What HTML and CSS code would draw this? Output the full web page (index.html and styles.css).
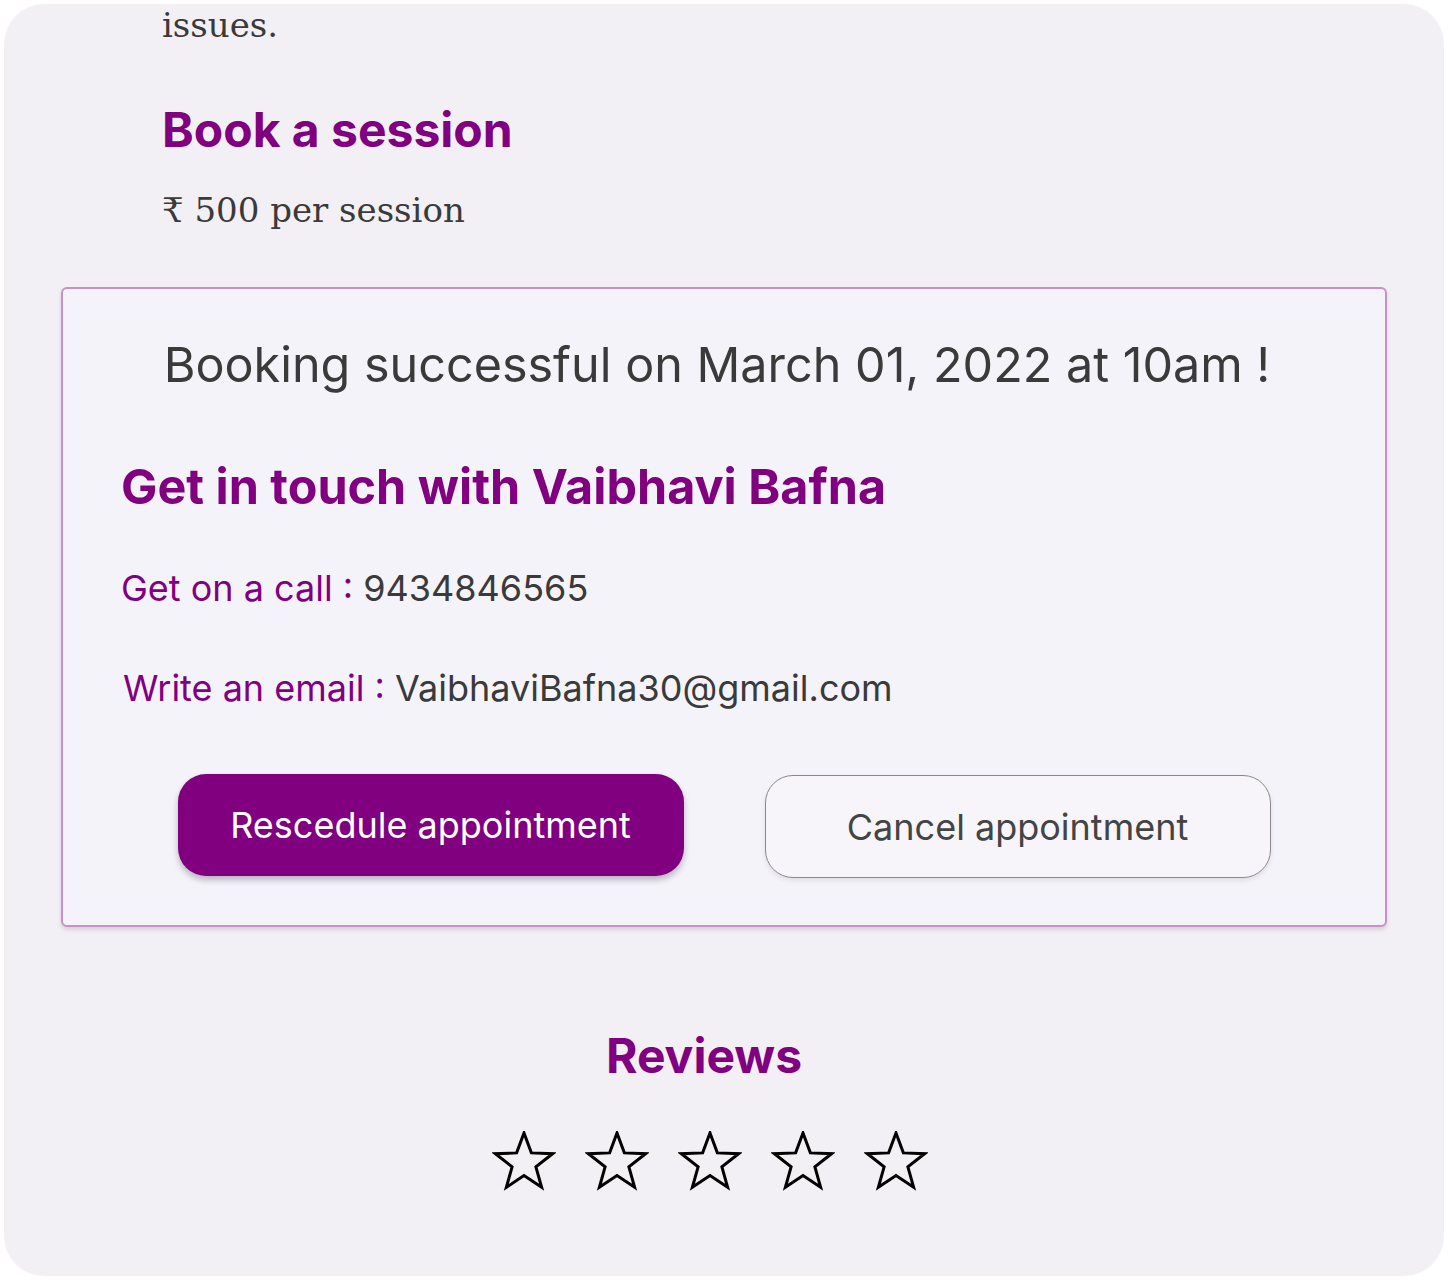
FILE: index.html
```html
<!DOCTYPE html>
<html>
<head>
<meta charset="utf-8">
<link rel="stylesheet" href="styles.css">
</head>
<body>
<div class="card">
  <p class="intro">issues.</p>
  <h2 class="book">Book a session</h2>
  <p class="price">₹ 500 per session</p>
  <section class="box">
    <h3 class="success">Booking successful on March 01, 2022 at 10am !</h3>
    <h2 class="touch">Get in touch with Vaibhavi Bafna</h2>
    <p class="line call"><span class="label">Get on a call :</span> 9434846565</p>
    <p class="line email"><span class="label">Write an email :</span> VaibhaviBafna30@gmail.com</p>
    <div class="actions">
      <button class="btn primary">Rescedule appointment</button>
      <button class="btn outline">Cancel appointment</button>
    </div>
  </section>
  <h2 class="reviews">Reviews</h2>
  <div class="stars">
    <svg class="star" viewBox="0 0 64 60"><polygon points="32,2 39.35,21.89 60.53,22.73 43.89,35.86 49.63,56.27 32,44.5 14.37,56.27 20.11,35.86 3.47,22.73 24.65,21.89"/></svg>
    <svg class="star" viewBox="0 0 64 60"><polygon points="32,2 39.35,21.89 60.53,22.73 43.89,35.86 49.63,56.27 32,44.5 14.37,56.27 20.11,35.86 3.47,22.73 24.65,21.89"/></svg>
    <svg class="star" viewBox="0 0 64 60"><polygon points="32,2 39.35,21.89 60.53,22.73 43.89,35.86 49.63,56.27 32,44.5 14.37,56.27 20.11,35.86 3.47,22.73 24.65,21.89"/></svg>
    <svg class="star" viewBox="0 0 64 60"><polygon points="32,2 39.35,21.89 60.53,22.73 43.89,35.86 49.63,56.27 32,44.5 14.37,56.27 20.11,35.86 3.47,22.73 24.65,21.89"/></svg>
    <svg class="star" viewBox="0 0 64 60"><polygon points="32,2 39.35,21.89 60.53,22.73 43.89,35.86 49.63,56.27 32,44.5 14.37,56.27 20.11,35.86 3.47,22.73 24.65,21.89"/></svg>
  </div>
</div>
</body>
</html>
```
FILE: styles.css
```css
html, body { margin: 0; padding: 0; background: #ffffff; }
.card {
  margin: 4px;
  width: 1440px;
  height: 1272px;
  box-sizing: border-box;
  border-radius: 40px;
  background: #f2f0f5;
  overflow: hidden;
  padding: 0 57px;
}
.intro, .price {
  font-family: "DejaVu Serif", "Liberation Serif", serif;
  color: #3a3a3a;
  margin: 0;
  padding-left: 101px;
  font-size: 34px;
}
.intro { margin-top: 0; line-height: 42px; }
.book {
  font-family: Inter, "Noto Sans", sans-serif;
  font-weight: 700;
  color: #800080;
  font-size: 48px;
  margin: 55px 0 0 0;
  padding-left: 101px;
  line-height: 58px;
}
.price { margin-top: 29px; line-height: 44px; }
.box {
  margin-top: 55px;
  border: 2px solid #c890c8;
  border-radius: 6px;
  background: #f5f3fa;
  box-shadow: 0 3px 4px rgba(0,0,0,0.12);
  height: 640px;
  box-sizing: border-box;
  padding: 0 58px;
}
.success {
  font-family: Inter, "Noto Sans", sans-serif;
  font-weight: 400;
  font-size: 48.5px;
  color: #3a3a3a;
  text-align: center;
  margin: 46px 0 0 0;
  padding-right: 14px;
  line-height: 60px;
}
.touch {
  font-family: Inter, "Noto Sans", sans-serif;
  font-weight: 700;
  color: #800080;
  font-size: 48.5px;
  margin: 63px 0 0 0;
  line-height: 58px;
}
.line {
  font-family: Inter, "Noto Sans", sans-serif;
  font-size: 36px;
  color: #3a3a3a;
  margin: 0;
  line-height: 44px;
}
.line .label { color: #800080; }
.call { margin-top: 50px; }
.email { margin-top: 56px; padding-left: 2px; }
.actions {
  display: flex;
  justify-content: center;
  gap: 81px;
  margin-top: 64px;
}
.btn {
  width: 506px;
  height: 102px;
  font-family: Inter, "Noto Sans", sans-serif;
  font-size: 36px;
  border-radius: 28px;
}
.primary {
  background: #800080;
  color: #ffffff;
  border: none;
  box-shadow: 0 4px 6px rgba(0,0,0,0.25);
}
.outline {
  background: #f7f5fa;
  color: #444444;
  border: 1px solid #888888;
  box-shadow: 0 3px 5px rgba(0,0,0,0.08);
  margin-top: 1px;
  height: 103px;
}
.reviews {
  font-family: Inter, "Noto Sans", sans-serif;
  font-weight: 700;
  color: #800080;
  font-size: 48px;
  text-align: center;
  margin: 100px 0 0 0;
  padding-right: 40px;
  line-height: 58px;
}
.stars {
  display: flex;
  justify-content: center;
  gap: 29px;
  margin-top: 46px;
  padding-right: 28px;
}
.star {
  width: 64px;
  height: 60px;
  fill: none;
  stroke: #000000;
  stroke-width: 3;
  stroke-linejoin: miter;
}
```
